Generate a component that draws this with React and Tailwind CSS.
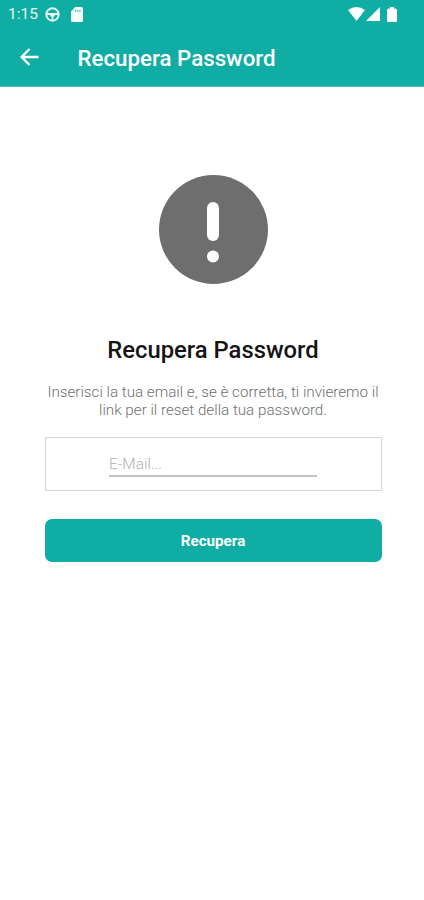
import { useState } from "react";

function StatusBar() {
    return (
        <div className="h-7 flex items-center justify-between pl-2 pr-[27px]">
            <div className="flex items-center">
                <span className="w-[37px] text-[15.5px] leading-7 whitespace-nowrap text-[#e6f6f4]">1:15</span>
                <svg className="w-[15px] h-[15px]" viewBox="0 0 15 15" fill="none" stroke="#e6f6f4">
                    <circle cx="7.5" cy="7.5" r="6.2" strokeWidth="2" />
                    <path d="M2 7h11M7.5 8v5" strokeWidth="1.8" />
                    <path d="M4.8 7.2h5.4L8.8 9.5H6.2z" fill="#e6f6f4" strokeWidth="0.8" />
                </svg>
                <svg className="ml-[11px] w-3 h-[15px]" viewBox="0 0 12 15" fill="#f4fffd">
                    <path
                        fillRule="evenodd"
                        d="M4.2 0H10.5Q12 0 12 1.5V13.5Q12 15 10.5 15H1.5Q0 15 0 13.5V4.4ZM3.8 3V4.6H5V3ZM6.1 3V4.6H7.3V3ZM8.4 3V4.6H9.6V3Z"
                    />
                </svg>
            </div>

            <div className="flex items-center">
                <svg className="w-[17px] h-[14px]" viewBox="0 0 17 14" fill="white">
                    <path d="M0 3Q8.5-3 17 3L8.5 14z" />
                </svg>
                <svg className="ml-px w-[14px] h-[14px]" viewBox="0 0 14 14" fill="white">
                    <path d="M14 0v14H0z" />
                </svg>
                <svg className="ml-[7px] w-[10px] h-[15px]" viewBox="0 0 10 15" fill="white">
                    <path d="M3 0h4v1.5h1.5Q10 1.5 10 3v10.5Q10 15 8.5 15h-7Q0 15 0 13.5V3Q0 1.5 1.5 1.5H3z" />
                </svg>
            </div>
        </div>
    );
}

export default function App() {
    const [email, setEmail] = useState("");

    const handleSubmit = (e) => {
        e.preventDefault();
    };

    return (
        <div className="w-full h-[900px] overflow-hidden bg-white font-[Roboto,sans-serif]">
            <header className="h-[87px] bg-[#0fada3] border-b border-[#4bbdb6]">
                <StatusBar />
                <div className="h-[58px] flex items-center pl-5">
                    <button type="button" aria-label="Indietro" className="w-[57.5px]">
                        <svg className="w-[19px] h-[18px]" viewBox="0 0 19 18" fill="none" stroke="white" strokeWidth="2.3">
                            <path d="M18.5 9H2M9.5 1L1.6 9l7.9 8" />
                        </svg>
                    </button>
                    <h1 className="pt-[2px] text-[22.3px] leading-7 font-medium text-white whitespace-nowrap">
                        Recupera Password
                    </h1>
                </div>
            </header>

            <main className="flex flex-col items-center pt-[88px] pl-[2px]">
                <svg className="w-[109px] h-[109px]" viewBox="0 0 109 109">
                    <circle cx="54.5" cy="54.5" r="54.5" fill="#6e6e6e" />
                    <rect x="48" y="27" width="12" height="39" rx="6" fill="white" />
                    <circle cx="54" cy="81.5" r="6" fill="white" />
                </svg>

                <h2 className="mt-[50px] text-[23.8px] leading-8 font-medium text-[#141414] whitespace-nowrap">
                    Recupera Password
                </h2>

                <p className="mt-[17px] text-center text-[15.2px] leading-[18px] font-light text-[#6f6f6f] whitespace-nowrap">
                    Inserisci la tua email e, se è corretta, ti invieremo il
                    <br />
                    link per il reset della tua password.
                </p>

                <form className="mt-[18px] w-[337px]" onSubmit={handleSubmit}>
                    <div className="h-[54px] border border-[#d4d4d4] flex justify-center pt-[15px]">
                        <input
                            type="email"
                            name="email"
                            placeholder="E-Mail..."
                            value={email}
                            onChange={(e) => setEmail(e.target.value)}
                            className="w-[208px] h-6 border-b-2 border-[#c4c4c4] text-[15.5px] font-light text-[#6f6f6f] placeholder:text-[#b0b0b0] outline-none"
                        />
                    </div>

                    <button
                        type="submit"
                        className="mt-7 w-full h-[43px] pt-[2px] rounded-[7px] bg-[#0fada3] text-white text-[15.2px] font-bold"
                    >
                        Recupera
                    </button>
                </form>
            </main>
        </div>
    );
}
